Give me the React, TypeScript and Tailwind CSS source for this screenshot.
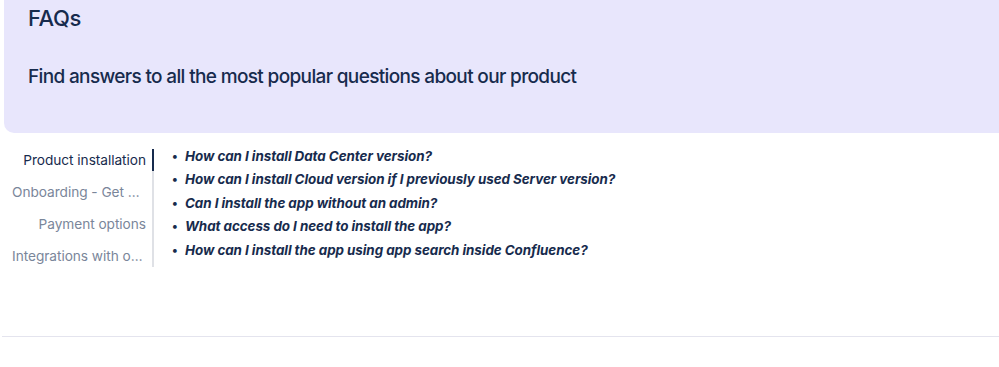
import React from "react";

const nav = [
  { label: "Product installation", active: true },
  { label: "Onboarding - Get started with the app", active: false },
  { label: "Payment options", active: false },
  { label: "Integrations with other apps", active: false },
];

const questions = [
  "How can I install Data Center version?",
  "How can I install Cloud version if I previously used Server version?",
  "Can I install the app without an admin?",
  "What access do I need to install the app?",
  "How can I install the app using app search inside Confluence?",
];

export default function App() {
  return (
    <div
      className="w-[999px] h-[367px] bg-white overflow-hidden text-[#172b4d]"
      style={{ fontFamily: "Inter, 'Noto Sans', sans-serif" }}
    >
      <div className="ml-[4px] h-[133px] bg-[#e8e6fc] rounded-bl-[10px] pl-[24px] pt-[3px]">
        <h1 className="text-[22px] leading-[30px] font-medium tracking-[-0.4px]">FAQs</h1>
        <p className="mt-[30px] text-[19px] leading-[28px] font-medium tracking-[-0.65px]">
          Find answers to all the most popular questions about our product
        </p>
      </div>
      <div className="flex mt-[11px]">
        <div className="w-[154px] flex flex-col">
          {nav.map((n, i) => (
            <div key={n.label} className="h-[32px] flex items-stretch">
              <div
                className={`flex-1 min-w-0 flex items-center justify-end pl-[12px] pr-[6px] ${
                  n.active ? "text-[#172b4d]" : "text-[#7a869a]"
                }`}
              >
                <span className="block truncate text-[13.7px] leading-[20px] text-right tracking-[-0.05px]">
                  {n.label}
                </span>
              </div>
              <div
                className={`w-[2px] flex flex-col ${i === 0 ? "pt-[5px]" : ""} ${
                  i === nav.length - 1 ? "pb-[5px]" : ""
                }`}
              >
                <div className="flex-1 bg-[#dfe1e6] flex flex-col">
                  {n.active && <div className="h-[22px] bg-[#172b4d]" />}
                </div>
              </div>
            </div>
          ))}
        </div>
        <ul className="pl-[18px] flex flex-col">
          {questions.map((q) => (
            <li
              key={q}
              className="flex items-center h-[23.5px] text-[13.4px] font-bold italic tracking-[-0.05px]"
            >
              <span className="w-[13px] text-[12px] not-italic">•</span>
              <span>{q}</span>
            </li>
          ))}
        </ul>
      </div>
      <div className="mt-[64px] ml-[2px] h-px bg-[#e4e4ee]" />
    </div>
  );
}
